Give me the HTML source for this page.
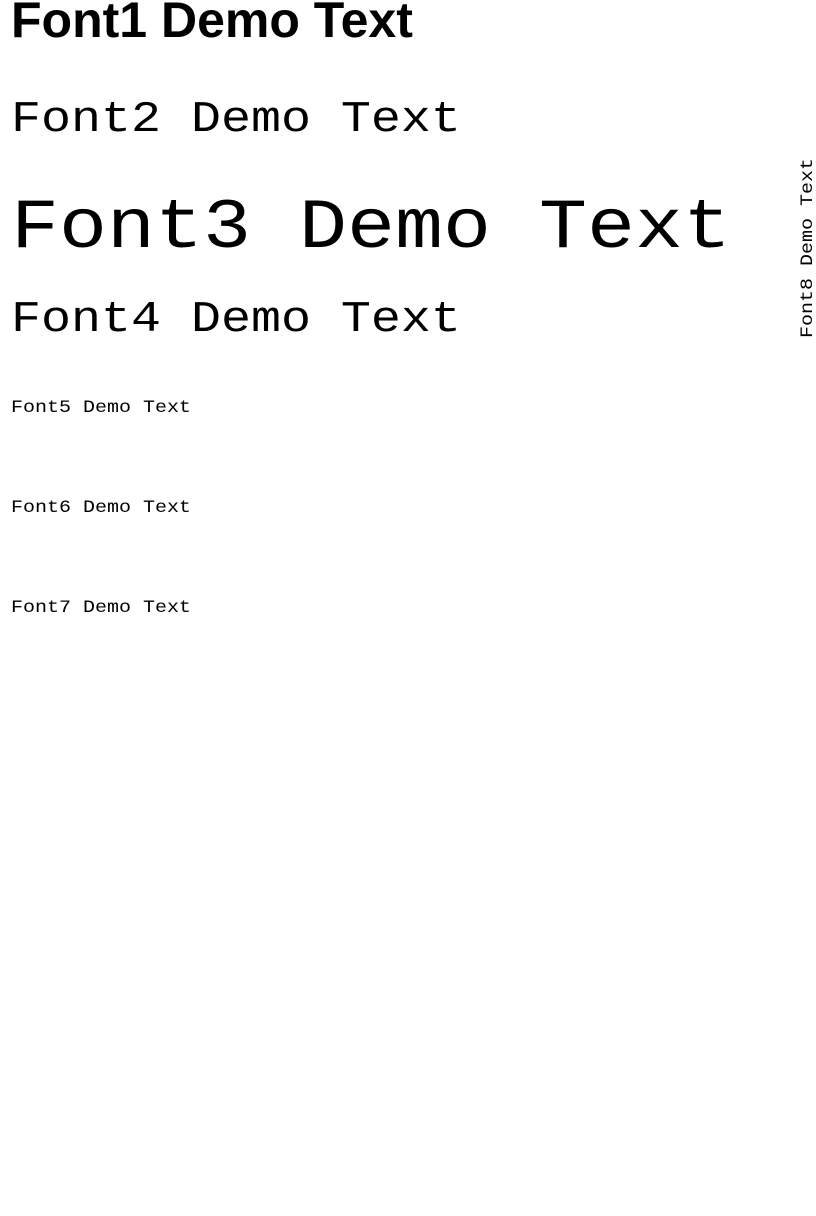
<!DOCTYPE html>
<html><head><meta charset="utf-8"><style>
html,body{margin:0;padding:0;background:#fff;width:816px;height:1216px;overflow:hidden}
</style></head><body>
<svg width="816" height="1216" xmlns="http://www.w3.org/2000/svg">
<text x="11" y="37" font-family="Liberation Sans, sans-serif" font-weight="bold" font-size="50">Font1 Demo Text</text>
<g font-family="Liberation Mono, monospace">
<text transform="translate(11,131) scale(1,0.88)" font-size="50">Font2 Demo Text</text>
<text transform="translate(11,247) scale(1,0.88)" font-size="80">Font3 Demo Text</text>
<text transform="translate(11,331) scale(1,0.88)" font-size="50">Font4 Demo Text</text>
<text transform="translate(11,412) scale(1,0.9)" font-size="20">Font5 Demo Text</text>
<text transform="translate(11,512) scale(1,0.9)" font-size="20">Font6 Demo Text</text>
<text transform="translate(11,612) scale(1,0.9)" font-size="20">Font7 Demo Text</text>
<text transform="translate(812,338) rotate(-90) scale(1,0.9)" font-size="20">Font8 Demo Text</text>
</g>
</svg>
</body></html>
